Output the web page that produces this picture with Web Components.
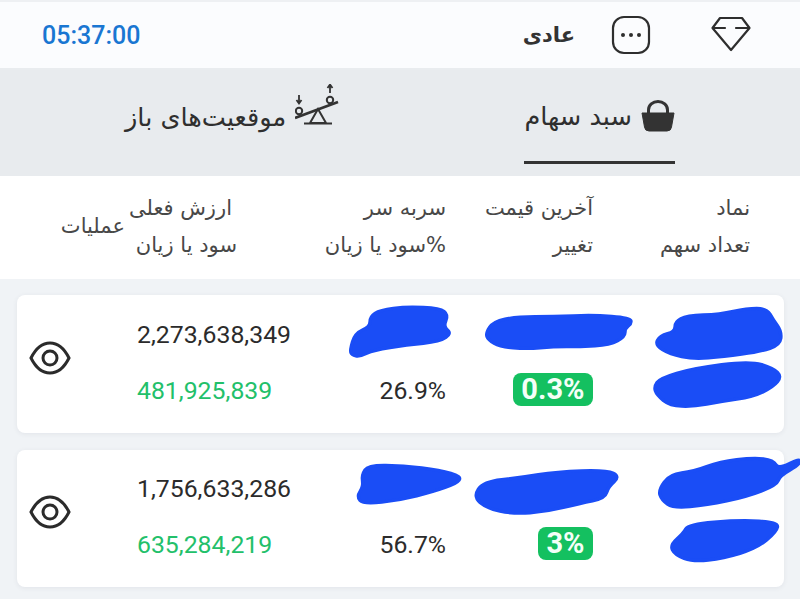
<!DOCTYPE html>
<html lang="fa">
<head>
<meta charset="utf-8">
<title>سبد سهام</title>
<style>
  html, body { margin: 0; height: 599px; overflow: hidden; background: #f0f3f6; }
  body { font-family: "DejaVu Sans", "Noto Sans", sans-serif; color: #2b2b2b; }
  stock-card { margin: 0 16px 17px 17px; }
</style>
</head>
<body>
<status-bar time="05:37:00" level="عادی"></status-bar>
<tab-strip></tab-strip>
<table-head></table-head>
<div style="height:16px"></div>
<stock-card value="2,273,638,349" profit="481,925,839" percent="26.9%" change="0.3%" style="--mark-top:0px"
  marks="30,165 45,115 90,95 90,65 120,45 200,35 300,40 325,60 310,95 335,115 300,140 200,150 100,165 60,185 35,180|437,115 460,80 530,65 640,65 760,60 870,68 875,85 855,100 855,125 810,150 720,155 640,155 560,162 480,155 445,135|945,150 960,122 1005,110 1005,80 1040,62 1140,58 1220,40 1280,40 1300,75 1325,110 1320,150 1260,170 1150,185 1060,192 990,178|942,275 960,250 1060,220 1230,198 1300,220 1325,245 1300,275 1240,305 1140,320 1060,335 990,332 950,300"></stock-card>
<stock-card value="1,756,633,286" profit="635,284,219" percent="56.7%" change="3%" style="--mark-top:-5px;--pad:10px;height:137px"
  marks="50,155 70,125 65,90 85,60 190,62 300,75 365,95 350,115 280,140 180,165 70,178|400,155 430,110 540,98 650,80 800,75 840,95 805,125 795,160 720,175 620,200 520,207 440,190|955,135 990,88 1060,80 1140,50 1240,38 1300,45 1315,72 1380,40 1380,58 1320,92 1310,120 1220,155 1100,180 1000,190 965,165|990,300 1030,265 1045,238 1200,225 1315,232 1310,260 1250,310 1150,340 1060,350 1005,330"></stock-card>

<script>
class StatusBar extends HTMLElement {
  connectedCallback() {
    this.attachShadow({ mode: 'open' });
    this.shadowRoot.innerHTML = `
      <style>
        :host { display: flex; align-items: center; box-sizing: border-box; height: 70px; padding: 2px 49px 2px 42px;
                background: #fbfcfe; border-top: 2px solid #eef0f3; border-bottom: 2px solid #e9ecef; }
        .time { font: 500 25px Roboto, sans-serif; color: #1976d2; flex: 1; }
        .level { font: bold 21px "DejaVu Sans", sans-serif; color: #333; direction: rtl; margin-right: 36px; }
        svg { display: block; }
        .dots { margin-right: 60px; }
      </style>
      <span class="time">${this.getAttribute('time')}</span>
      <span class="level">${this.getAttribute('level')}</span>
      <svg class="dots" width="40" height="40" viewBox="0 0 40 40" fill="none" stroke="#2e2e2e" stroke-width="2.2">
        <rect x="2" y="2" width="36" height="36" rx="11"/>
        <circle cx="12" cy="20" r="2" fill="#2e2e2e" stroke="none"/>
        <circle cx="20" cy="20" r="2" fill="#2e2e2e" stroke="none"/>
        <circle cx="28" cy="20" r="2" fill="#2e2e2e" stroke="none"/>
      </svg>
      <svg width="40" height="38" viewBox="0 0 40 38" fill="none" stroke="#2e2e2e" stroke-width="2.2" stroke-linejoin="round" stroke-linecap="round">
        <path d="M9 2 H31 L38.5 12 L20 34 L1.500 12 Z"/>
        <path d="M3 12 H14 M25 12 H37"/>
      </svg>`;
  }
}

class TabStrip extends HTMLElement {
  connectedCallback() {
    this.attachShadow({ mode: 'open' });
    this.shadowRoot.innerHTML = `
      <style>
        :host { display: flex; box-sizing: border-box; height: 106px; padding: 0 125px 0 125px; justify-content: space-between;
                background: #e8ebee; color: #2f2f2f; }
        .tab { display: flex; align-items: center; gap: 9px; box-sizing: border-box; height: 94px; font-size: 25.6px; white-space: nowrap; }
        .on { border-bottom: 3px solid #333; }
        .txt { direction: rtl; }
        svg { display: block; }
      </style>
      <div class="tab">
        <span class="txt">موقعیت‌های باز</span>
        <svg width="45" height="41" viewBox="0 0 45 41" fill="none" stroke="#333" stroke-width="2" style="margin-top:-25px">
          <path d="M0 34 L43 18" stroke-width="2.6"/>
          <path d="M15 39 L23 25 L31 39 Z M9 39.500 H37" stroke-width="2"/>
          <circle cx="4" cy="27" r="3.200"/>
          <circle cx="35" cy="16" r="3.200"/>
          <path d="M4 11 V19 M1.500 16 L4 19.500 L6.500 16" stroke-width="1.800"/>
          <path d="M35 9 V1 M32.500 4 L35 .5 L37.500 4" stroke-width="1.800"/>
        </svg>
      </div>
      <div class="tab on">
        <span class="txt">سبد سهام</span>
        <svg width="34" height="32" viewBox="0 0 34 32">
          <path d="M7.500 14 V10 A9.500 8.500 0 0 1 26.500 10 V14" fill="none" stroke="#333" stroke-width="3"/>
          <path d="M1 13 H33 L30.500 27 Q30 31 26 31 H8 Q4 31 3.500 27 Z" fill="#333" stroke="#333" stroke-linejoin="round" stroke-width="1"/>
        </svg>
      </div>`;
  }
}

class TableHead extends HTMLElement {
  connectedCallback() {
    this.attachShadow({ mode: 'open' });
    this.shadowRoot.innerHTML = `
      <style>
        :host { display: grid; grid-template-columns: 125px 112px 209px 147px 157px; grid-template-rows: 37px 37px;
                box-sizing: border-box; height: 103px; padding: 13px 50px 0 0; background: #fff; direction: ltr;
                font: 21px "DejaVu Sans", sans-serif; color: #484848; align-items: center; text-align: right; }
        div { direction: rtl; white-space: nowrap; }
        .ops { grid-row: 1 / span 2; }
        .inset { padding-right: 5px; }
      </style>
      <div class="ops">عملیات</div>
      <div class="inset">ارزش فعلی</div><div>سربه سر</div><div>آخرین قیمت</div><div>نماد</div>
      <div style="grid-column:2">سود یا زیان</div><div>%سود یا زیان</div><div>تغییر</div><div>تعداد سهم</div>`;
  }
}

class ChangeBadge extends HTMLElement {
  connectedCallback() {
    this.attachShadow({ mode: 'open' });
    this.shadowRoot.innerHTML = `
      <style>
        :host { display: inline-block; padding: 0 8.500px; height: 33px; border-radius: 8px;
                background: #14c060; color: #f4fff8; font: bold 29px/33px Roboto, sans-serif; }
      </style>
      <slot></slot>`;
  }
}

class StockCard extends HTMLElement {
  // turn "x,y x,y ..." into a closed blob with rounded corners
  blob(list) {
    const pts = list.trim().split(/\s+/).map(p => p.split(',').map(Number));
    const mid = (a, b) => ((a[0] + b[0]) / 2) + ' ' + ((a[1] + b[1]) / 2);
    let d = 'M' + mid(pts[pts.length - 1], pts[0]);
    pts.forEach((p, i) => { d += ' Q' + p[0] + ' ' + p[1] + ' ' + mid(p, pts[(i + 1) % pts.length]); });
    return d + ' Z';
  }

  connectedCallback() {
    this.attachShadow({ mode: 'open' });
    const marks = this.getAttribute('marks').split('|').map(m => `<path d="${this.blob(m)}"/>`).join('');
    this.shadowRoot.innerHTML = `
      <style>
        :host { display: grid; position: relative; grid-template-columns: 120px 163px 146px 147px 157px; grid-template-rows: 56px 56px;
                box-sizing: border-box; height: 138px; padding: var(--pad, 11px) 34px 0 0; background: #fff; border-radius: 8px;
                box-shadow: 0 1px 5px rgba(60,70,90,.08); align-items: center; font: 24.8px Roboto, sans-serif; color: #2b2b2b; }
        .eye { grid-row: 1 / span 2; align-self: start; margin: 35px 0 0 12px; display: block; }
        .profit { color: #22c06a; grid-column: 2; }
        .num { text-align: right; }
        .num change-badge { vertical-align: middle; margin-top: -2px; }
        .blue { position: absolute; left: 323px; top: var(--mark-top, 0px); width: 460px; height: 154px; overflow: visible;
                fill: #1a4df6; stroke: #1a4df6; stroke-width: 10; stroke-linejoin: round; }
      </style>
      <svg class="eye" width="42" height="34" viewBox="0 0 42 34" fill="none" stroke="#2b2b2b" stroke-width="3">
        <path d="M2 17 C7 7 13 2 21 2 C29 2 35 7 40 17 C35 27 29 32 21 32 C13 32 7 27 2 17 Z"/>
        <circle cx="21" cy="17" r="7"/>
      </svg>
      <div>${this.getAttribute('value')}</div>
      <div></div><div></div><div></div>
      <div class="profit">${this.getAttribute('profit')}</div>
      <div class="num">${this.getAttribute('percent')}</div>
      <div class="num"><change-badge>${this.getAttribute('change')}</change-badge></div>
      <div></div>
      <svg class="blue" viewBox="0 0 1380 462">${marks}</svg>`;
  }
}

customElements.define('status-bar', StatusBar);
customElements.define('tab-strip', TabStrip);
customElements.define('table-head', TableHead);
customElements.define('change-badge', ChangeBadge);
customElements.define('stock-card', StockCard);
</script>
</body>
</html>
